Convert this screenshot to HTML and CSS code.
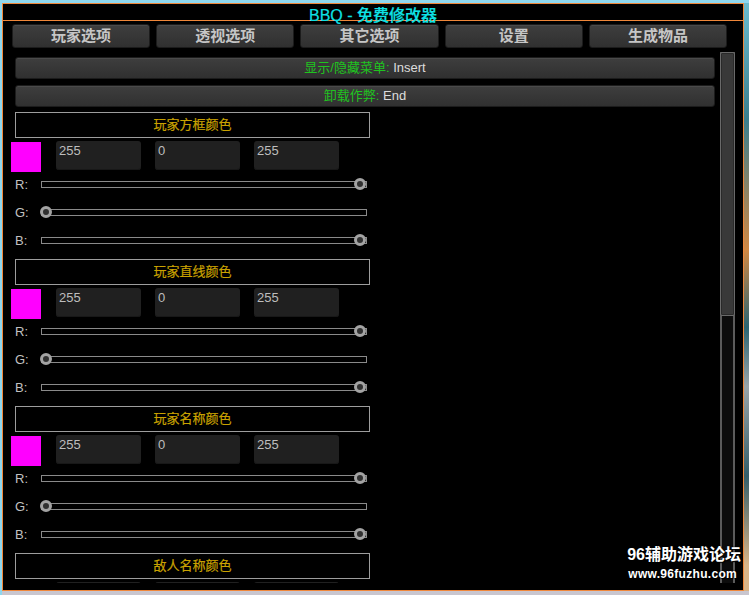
FILE: index.html
```html
<!DOCTYPE html>
<html lang="zh-CN">
<head>
<meta charset="utf-8">
<title>BBQ - 免费修改器</title>
<link rel="stylesheet" href="styles.css">
</head>
<body>
<div class="window">
  <div class="titlebar"><span class="title">BBQ - 免费修改器</span></div>
  <div class="tabs">
    <div class="tab">玩家选项</div>
    <div class="tab">透视选项</div>
    <div class="tab">其它选项</div>
    <div class="tab">设置</div>
    <div class="tab">生成物品</div>
  </div>
  <div class="main">
    <div class="scroll">
      <div class="btn btn-first"><span class="green">显示/隐藏菜单:</span>&nbsp;Insert</div>
      <div class="btn btn-second"><span class="green">卸载作弊:</span>&nbsp;End</div>

      <div class="section">
        <div class="sec-head">玩家方框颜色</div>
        <div class="color-row">
          <div class="swatch"></div>
          <div class="field">255</div>
          <div class="field">0</div>
          <div class="field">255</div>
        </div>
        <div class="slider-row"><span class="lbl">R:</span><div class="track"><span class="knob" style="left:312px"></span></div></div>
        <div class="slider-row"><span class="lbl">G:</span><div class="track"><span class="knob" style="left:-2px"></span></div></div>
        <div class="slider-row"><span class="lbl">B:</span><div class="track"><span class="knob" style="left:312px"></span></div></div>
      </div>

      <div class="section">
        <div class="sec-head">玩家直线颜色</div>
        <div class="color-row">
          <div class="swatch"></div>
          <div class="field">255</div>
          <div class="field">0</div>
          <div class="field">255</div>
        </div>
        <div class="slider-row"><span class="lbl">R:</span><div class="track"><span class="knob" style="left:312px"></span></div></div>
        <div class="slider-row"><span class="lbl">G:</span><div class="track"><span class="knob" style="left:-2px"></span></div></div>
        <div class="slider-row"><span class="lbl">B:</span><div class="track"><span class="knob" style="left:312px"></span></div></div>
      </div>

      <div class="section">
        <div class="sec-head">玩家名称颜色</div>
        <div class="color-row">
          <div class="swatch"></div>
          <div class="field">255</div>
          <div class="field">0</div>
          <div class="field">255</div>
        </div>
        <div class="slider-row"><span class="lbl">R:</span><div class="track"><span class="knob" style="left:312px"></span></div></div>
        <div class="slider-row"><span class="lbl">G:</span><div class="track"><span class="knob" style="left:-2px"></span></div></div>
        <div class="slider-row"><span class="lbl">B:</span><div class="track"><span class="knob" style="left:312px"></span></div></div>
      </div>

      <div class="section">
        <div class="sec-head">敌人名称颜色</div>
        <div class="color-row">
          <div class="swatch"></div>
          <div class="field"></div>
          <div class="field"></div>
          <div class="field"></div>
        </div>
      </div>
    </div>
    <div class="scrollbar"><div class="thumb"></div></div>
  </div>
  <div class="watermark">
    <div class="wm-big">96辅助游戏论坛</div>
    <div class="wm-small">www.96fuzhu.com</div>
  </div>
</div>
</body>
</html>
```
FILE: styles.css
```css
html, body {
  margin: 0;
  padding: 0;
}
body {
  width: 749px;
  height: 595px;
  overflow: hidden;
  box-sizing: border-box;
  padding: 3px 0 0 2px;
  font-family: "Liberation Sans", "Noto Sans CJK SC", sans-serif;
  background:
    linear-gradient(to bottom, #8fd7ee 0, #8fd7ee 3px, transparent 3px),
    linear-gradient(to right, #8fd7ee 0, #8fd7ee 2px, transparent 2px),
    linear-gradient(to top, #c9c6cf 0, #c9c6cf 4px, transparent 4px),
    linear-gradient(to bottom, #6cbdd0 0%, #3b7f8e 20%, #d08844 42%, #2c6572 55%, #9aa4a8 65%, #355f6a 80%, #d8b488 95%);
}
.window {
  position: relative;
  width: 742px;
  height: 588px;
  box-sizing: border-box;
  border: 1px solid #f0873a;
  background: #000;
  overflow: hidden;
}
.titlebar {
  height: 12px;
  padding-top: 4px;
  border-bottom: 1px solid #f0873a;
  text-align: center;
}
.title {
  display: block;
  font-size: 16px;
  line-height: 16px;
  font-weight: 500;
  color: #0ee2e6;
  white-space: nowrap;
  -webkit-text-stroke: 0.2px #0ee2e6;
}
.tabs {
  display: flex;
  gap: 6px;
  margin: 3px 16px 0 9px;
}
.tab {
  flex: 1;
  height: 24px;
  box-sizing: border-box;
  border: 1px solid #1c1c1c;
  border-radius: 3px;
  background: linear-gradient(to bottom, #3e3e3e, #303030);
  box-shadow: inset 0 1px 0 #4a4a4a;
  color: #c6c6c6;
  font-weight: bold;
  font-size: 15px;
  line-height: 22px;
  text-align: center;
}
.main {
  display: flex;
  margin-top: 4px;
  height: 531px;
}
.scroll {
  width: 712px;
  height: 531px;
  box-sizing: border-box;
  padding: 5px 0 0 12px;
  overflow: hidden;
}
.btn {
  width: 700px;
  height: 22px;
  box-sizing: border-box;
  border: 1px solid #1c1c1c;
  border-radius: 3px;
  background: linear-gradient(to bottom, #3e3e3e, #303030);
  box-shadow: inset 0 1px 0 #4a4a4a;
  color: #dcdcdc;
  font-size: 13px;
  line-height: 20px;
  text-align: center;
}
.btn-first { margin-bottom: 6px; }
.btn-second { margin-bottom: 5px; }
.green { color: #1fc41f; }
.section {
  height: 147px;
}
.sec-head {
  width: 355px;
  height: 26px;
  box-sizing: border-box;
  border: 1px solid #9d9d9d;
  color: #c9a200;
  font-size: 13px;
  line-height: 24px;
  text-align: center;
  -webkit-text-stroke: 0.2px #c9a200;
}
.color-row {
  display: flex;
  align-items: flex-start;
  height: 29px;
  margin-top: 3px;
}
.swatch {
  width: 30px;
  height: 30px;
  margin: 1px 15px 0 -4px;
  background: #ff00ff;
}
.field {
  width: 85px;
  height: 29px;
  box-sizing: border-box;
  margin-right: 14px;
  padding: 2px 3px;
  border-radius: 3px;
  background: #202020;
  box-shadow: inset 0 -1px 0 #181818;
  color: #bdbdbd;
  font-size: 13px;
  line-height: 15px;
}
.slider-row {
  display: flex;
  align-items: center;
  height: 28px;
}
.lbl {
  width: 26px;
  color: #c2c2c2;
  font-size: 13px;
  line-height: 14px;
  margin-top: 2px;
}
.track {
  position: relative;
  width: 326px;
  height: 7px;
  box-sizing: border-box;
  border: 1px solid #8a8a8a;
  background: #000;
}
.knob {
  position: absolute;
  top: -4px;
  width: 6px;
  height: 6px;
  border: 3px solid #a3a3a3;
  border-radius: 50%;
  background: #303030;
}
.scrollbar {
  width: 15px;
  height: 531px;
  box-sizing: border-box;
  margin-left: 5px;
  border-left: 2px solid #5b5b5b;
  border-right: 2px solid #5b5b5b;
  background: #0c0c0c;
}
.thumb {
  height: 264px;
  margin: 0 -2px;
  box-sizing: border-box;
  border: 1px solid #6a6a6a;
  border-radius: 2px;
  background: #393939;
  box-shadow: inset 0 0 0 1px #2a2a2a;
}
.watermark {
  position: absolute;
  right: 2px;
  bottom: 10px;
  text-align: right;
  color: #fff;
  text-shadow: 0 0 2px #000, 1px 1px 1px #000;
}
.wm-big {
  font-size: 16px;
  font-weight: bold;
  line-height: 18px;
  letter-spacing: 0;
}
.wm-small {
  margin-top: 4px;
  margin-right: 4px;
  font-size: 12px;
  font-weight: bold;
  line-height: 12px;
  letter-spacing: 0.3px;
}
```
